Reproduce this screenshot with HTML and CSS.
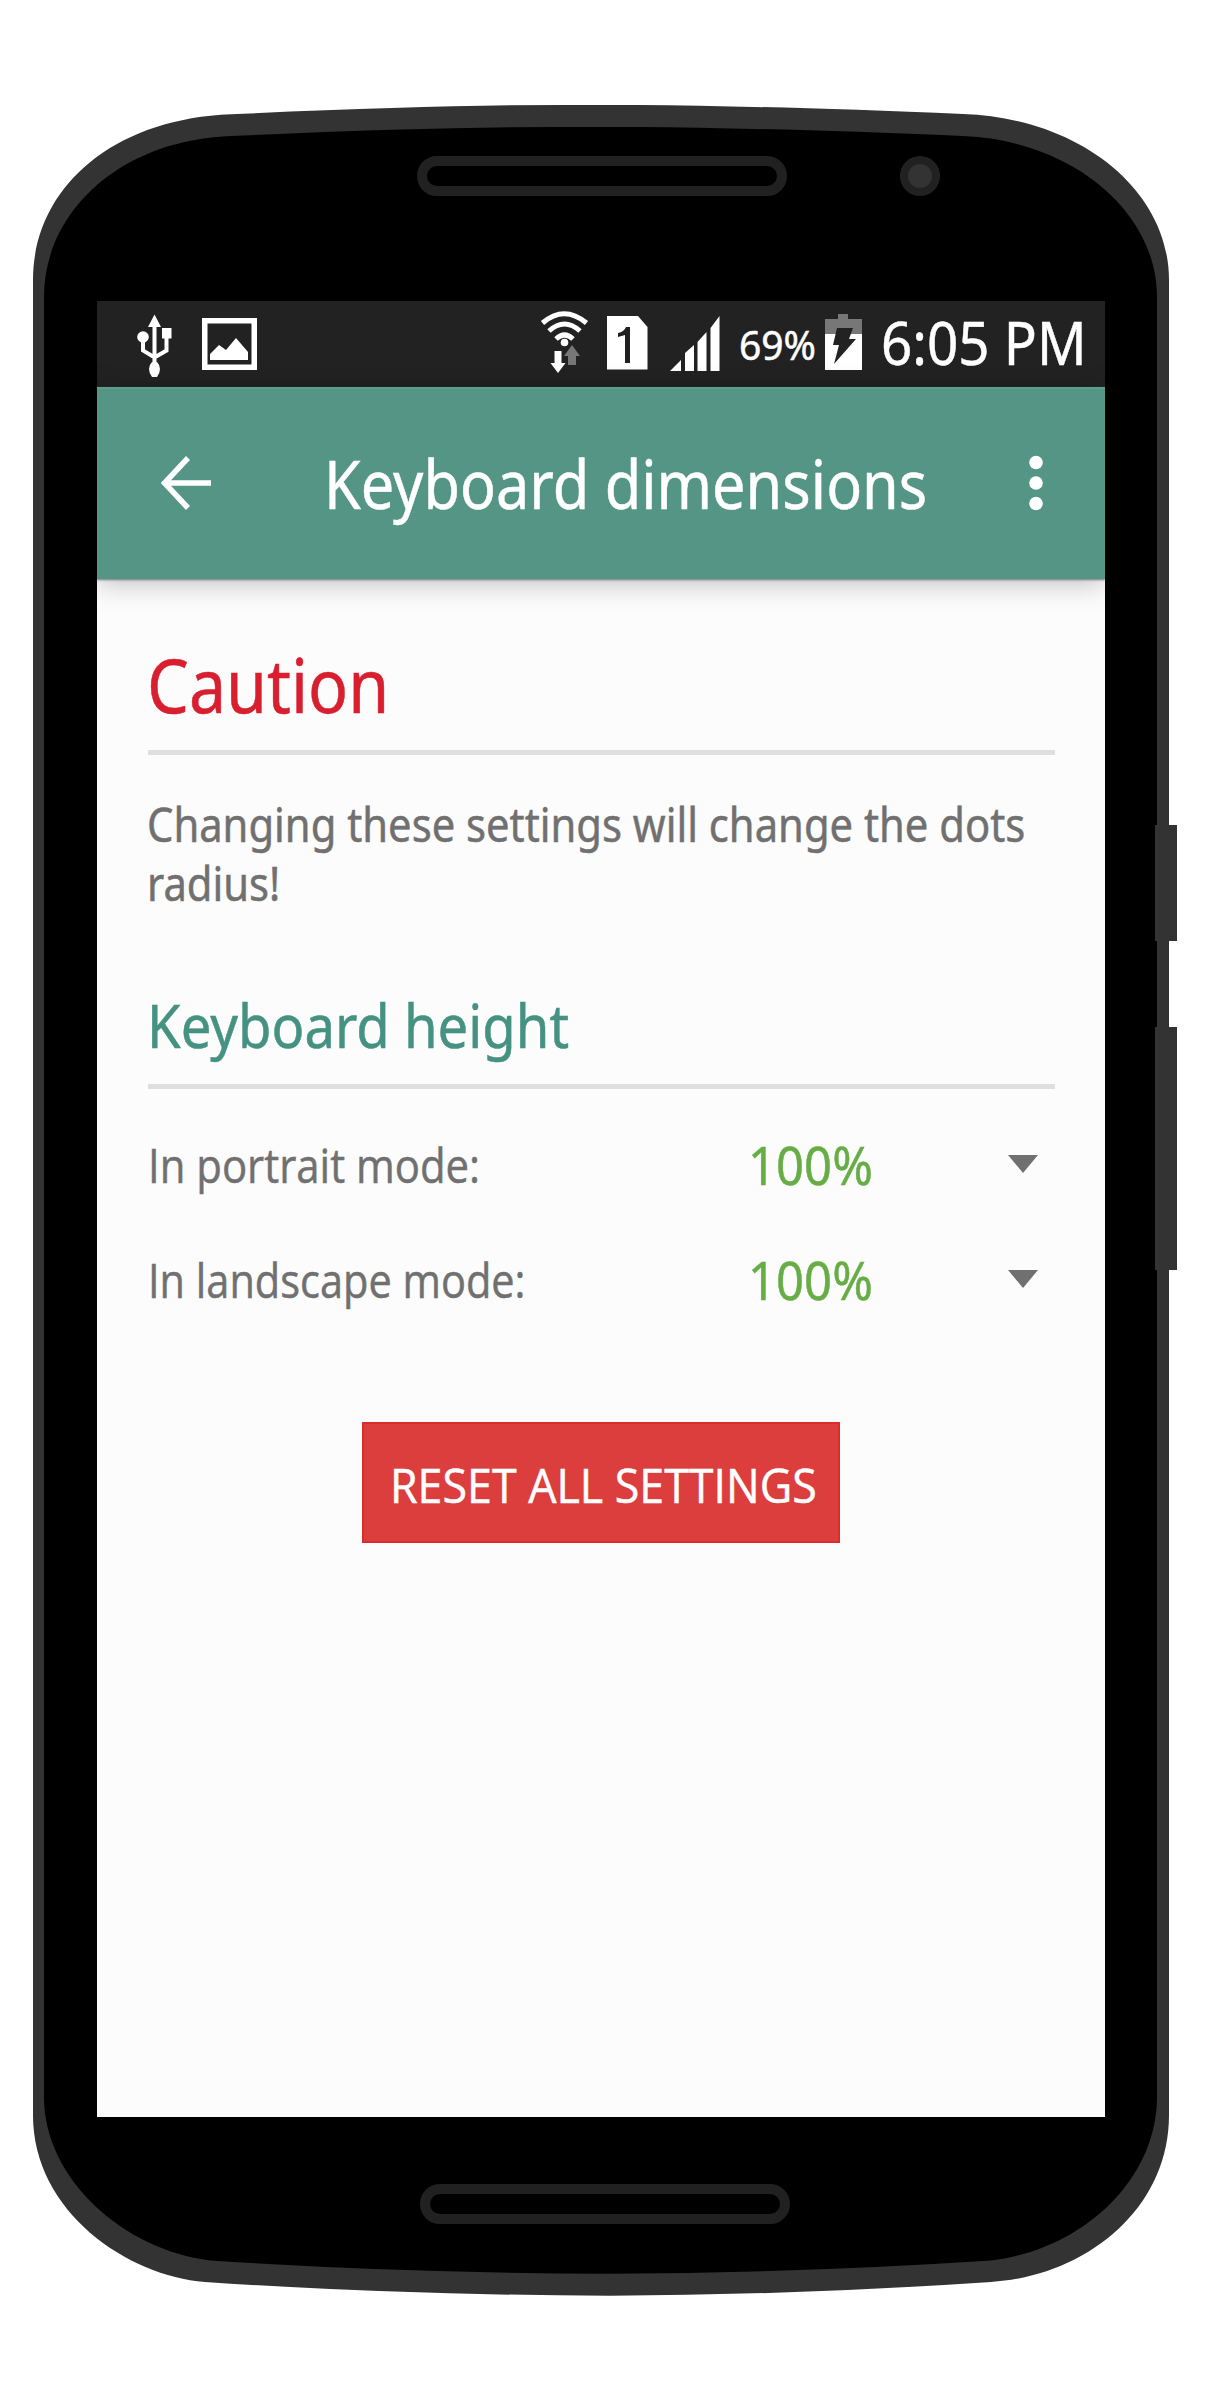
FILE: index.html
```html
<!DOCTYPE html>
<html lang="en">
<head>
<meta charset="utf-8">
<title>Keyboard dimensions</title>
<link rel="stylesheet" href="styles.css">
</head>
<body>
<main class="device">
  <svg class="bezel" viewBox="0 0 1213 2400" aria-hidden="true">
    <g fill="#333">
      <path d="M33 280C33 190 110 119 231 114.300Q430 105 560 105H640Q770 106 963 114C1080 118 1169 190 1169 280V2115C1169 2210 1085 2276 991 2282Q800 2295 610 2295.700Q400 2295 205 2282C128 2276 33 2212 33 2115Z"/>
      <rect x="1155" y="825" width="22" height="116"/>
      <rect x="1155" y="1027" width="22" height="243"/>
    </g>
    <path d="M44 297C44 212 120 140 231 136Q430 127 560 127H640Q770 128 963 136C1070 140 1157 210 1157 297V2097C1157 2180 1082 2250 991 2260.500Q800 2273 610 2273.700Q400 2273 210 2260.500C125 2250 44 2180 44 2097Z"/>
    <path fill="#333" d="M1155 825h4v116h-4zM1155 1027h4v243h-4z"/>
    <g fill="none" stroke="#212121" stroke-width="10">
      <rect x="422" y="161" width="360" height="30" rx="15"/>
      <rect x="425" y="2189" width="360" height="30" rx="15"/>
    </g>
    <circle cx="920" cy="176" r="20" fill="#212121"/>
    <circle cx="920" cy="176" r="12" fill="#333"/>
  </svg>

  <section class="screen">
    <header class="status">
      <svg class="status-left" viewBox="0 0 170 86" fill="#fff">
        <path d="M57.500 13.500l6.500 12.500H51z"/>
        <path fill="none" stroke="#fff" stroke-width="4" d="M57.500 24V64M46 38V49.500L57.500 56.500 69.500 49.500V34"/>
        <circle cx="46" cy="36" r="5.800"/>
        <path d="M65 27h9.500v10.500H65zM55 61h5q3 3 3 7t-3 8h-5q-3-4-3-8t3-7z"/>
        <path fill-rule="evenodd" d="M105 17h55v52h-55zM110.500 22.500v41h44v-41z"/>
        <path d="M113 59v-6l9-9 7 5 10-12 12 14v8z"/>
      </svg>
      <svg class="status-right" viewBox="0 0 195 86" fill="#fff">
        <g fill="none" stroke="#fff" stroke-width="5">
          <path d="M14.500 22q21.500-18.500 44 0M21 30q15.500-14 31 0M28 38q8.500-8 17 0"/>
        </g>
        <circle cx="36.500" cy="41.500" r="3.800"/>
        <path d="M26.500 50h7v12h4l-7.500 10-7.500-10h4z"/>
        <path fill="#777" d="M44 44l8 11h-4v9h-8v-9h-4z"/>
        <path d="M79 15h31l9.500 11v42.500H79z"/>
        <path fill="#202020" d="M98 26h4v36h-5V34l-7 2v-4q6-1 8-6z"/>
        <path d="M142 70l11-11v11zM157 52l9-8v26h-9zM169.500 41l9-10v39h-9zM182.500 27l9-12v55h-9z"/>
      </svg>
      <span class="fit percent">69%</span>
      <svg class="battery" viewBox="0 0 37 56">
        <path fill="#777" d="M0 5h13V0h10v5h14v16H0z"/>
        <path fill="#fff" d="M0 20h37v36H0z"/>
        <path fill="#222" d="M12 14h16l-4 11h7L9 50l5-19H8z"/>
      </svg>
      <span class="fit clock">6:05 PM</span>
    </header>

    <nav class="appbar">
      <svg class="back" viewBox="0 0 50 54" fill="none" stroke="#fff" stroke-width="5.500"><path d="M27 2L3.500 27 27 52M3.500 27H50"/></svg>
      <h1 class="fit title">Keyboard dimensions</h1>
      <svg class="more" viewBox="0 0 14 56" fill="#fff"><circle cx="7" cy="7.500" r="6.800"/><circle cx="7" cy="28" r="6.800"/><circle cx="7" cy="48.500" r="6.800"/></svg>
    </nav>

    <div class="content">
      <h2 class="fit caution">Caution</h2>
      <hr class="rule">
      <p class="fit note">Changing these settings will change the dots<br>radius!</p>
      <h3 class="fit subhead">Keyboard height</h3>
      <hr class="rule">
      <div class="row">
        <span class="fit label portrait">In portrait mode:</span>
        <span class="fit value">100%</span>
        <svg class="caret" viewBox="0 0 30 18"><path fill="#707070" d="M0 0h30L15 18z"/></svg>
      </div>
      <div class="row">
        <span class="fit label landscape">In landscape mode:</span>
        <span class="fit value">100%</span>
        <svg class="caret" viewBox="0 0 30 18"><path fill="#707070" d="M0 0h30L15 18z"/></svg>
      </div>
      <button class="reset"><span class="fit reset-text">RESET ALL SETTINGS</span></button>
    </div>
  </section>
</main>
</body>
</html>
```
FILE: styles.css
```css
* { box-sizing: border-box; }
body { margin: 0; background: #fff; font-family: "Noto Sans", "Open Sans", sans-serif; }
svg { display: block; flex: none; }
h1, h2, h3, p { margin: 0; font-weight: 400; }

.device { position: relative; width: 1213px; height: 2400px; padding: 301px 108px 283px 97px; }
.bezel { position: absolute; inset: 0; width: 1213px; height: 2400px; }
.screen { position: relative; height: 1816px; background: #fcfcfc; display: flex; flex-direction: column; overflow: hidden; }

/* Condensed text: --fit is the horizontal squeeze */
.fit { display: block; flex: none; white-space: nowrap; transform: scaleX(var(--fit)); transform-origin: 0 50%; -webkit-text-stroke: .5px currentColor; }

.status { height: 86px; flex: none; display: flex; align-items: flex-start; background: #222; color: #fff; }
.status-left { width: 170px; height: 86px; }
.status-right { width: 195px; height: 86px; margin-left: 261px; }
.percent { --fit: .975; width: 86px; margin-left: 16px; font-size: 40px; line-height: 88px; }
.battery { width: 37px; height: 56px; margin-top: 13px; }
.clock { --fit: .897; width: 220px; margin-left: 19px; font-size: 61px; line-height: 82px; }

.appbar { position: relative; height: 192px; flex: none; display: flex; align-items: center; background: #549586; color: #fff; border-top: 2px solid #5a9e8e; box-shadow: 0 1px 2px #777, 0 4px 26px rgba(0, 0, 0, .25); }
.back { width: 50px; height: 54px; margin: 0 0 2px 64px; }
.title { --fit: .874; width: 700px; margin: 0 0 3px 113px; font-size: 68px; line-height: 90px; }
.more { width: 14px; height: 56px; margin: 0 0 2px 5px; }

.content { padding: 0 51px; display: flex; flex-direction: column; }
.caution { --fit: .896; margin: 56px 0 0 -1px; font-size: 74px; line-height: 100px; color: #d81f2f; }
.rule { width: 907px; height: 5px; margin: 0; border: 0; background: #dfdfdf; }
.caution + .rule { margin-top: 15px; }
.note { --fit: .879; margin: 39px 0 0 -1px; font-size: 47.500px; line-height: 59.300px; color: #707070; }
.subhead { --fit: .907; margin: 72px 0 0 -1px; font-size: 60px; line-height: 80px; color: #459282; }
.subhead + .rule { margin-top: 19px; }
.row { display: flex; height: 115.500px; align-items: flex-start; }
.subhead + .rule + .row { margin-top: 42px; }
.label { width: 598px; margin-left: 0; font-family: "Open Sans", "Noto Sans", sans-serif; font-size: 47.500px; line-height: 68px; color: #707070; }
.portrait { --fit: .882; }
.landscape { --fit: .874; }
.value { --fit: .925; width: 170px; margin-left: 2px; font-size: 53px; line-height: 68px; color: #67ad45; }
.caret { width: 30px; height: 18px; margin: 24px 0 0 90px; }
.reset { width: 478px; height: 121px; margin: 60px 0 0 214px; padding: 3px 0 0 26px; border: 2px solid #dc2b2d; background: #dc3d3d; color: #fff; font: 47px/114px "Open Sans", "Noto Sans", sans-serif; text-align: left; }
.reset-text { --fit: .952; line-height: 117px; }
```
